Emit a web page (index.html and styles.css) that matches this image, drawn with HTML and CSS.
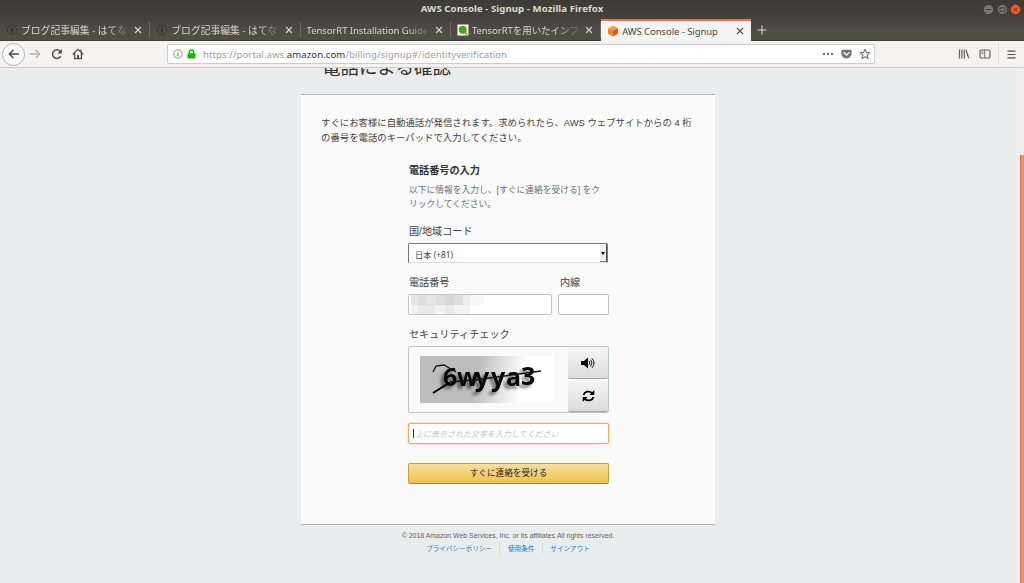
FILE: index.html
```html
<!DOCTYPE html>
<html lang="ja">
<head>
  <meta charset="UTF-8">
  <title>AWS Console - Signup</title>
  <link rel="stylesheet" href="styles.css">
</head>
<body>

  <header class="titlebar">
    <span class="window-title">AWS Console - Signup - Mozilla Firefox</span>
    <div class="window-buttons">
      <svg width="11" height="11" viewBox="0 0 11 11"><circle cx="5.5" cy="5.5" r="5" fill="#797670" stroke="#33322e" stroke-width=".6"/><path d="M3 5.5h5" stroke="#3c3b37"/></svg>
      <svg width="11" height="11" viewBox="0 0 11 11"><circle cx="5.5" cy="5.5" r="5" fill="#797670" stroke="#33322e" stroke-width=".6"/><rect x="3" y="3.8" width="5" height="3.5" fill="none" stroke="#3c3b37" stroke-width=".9"/></svg>
      <svg width="11" height="11" viewBox="0 0 11 11"><circle cx="5.5" cy="5.5" r="5" fill="#ee5a2a" stroke="#6b2f1c" stroke-width=".5"/><path d="M3.8 3.8l3.4 3.4M7.2 3.8L3.8 7.2" stroke="#5d2511"/></svg>
    </div>
  </header>

  <nav class="tabs">
    <div class="tab">
      <svg class="favicon" viewBox="0 0 12 12"><circle cx="6" cy="6" r="4.7" fill="none" stroke="#35342f" stroke-width=".9"/><path d="M6 2.5l1.2 3.2L6.7 9H5.3l-.5-3.3z" fill="#35342f"/></svg>
      <span class="tab-title fade jp1">ブログ記事編集 - はてな</span>
      <svg class="close" viewBox="0 0 8 8"><path d="M1 1l6 6M7 1L1 7"/></svg>
    </div>
    <div class="tab">
      <svg class="favicon" viewBox="0 0 12 12"><circle cx="6" cy="6" r="4.7" fill="none" stroke="#35342f" stroke-width=".9"/><path d="M6 2.5l1.2 3.2L6.7 9H5.3l-.5-3.3z" fill="#35342f"/></svg>
      <span class="tab-title fade jp1">ブログ記事編集 - はてな</span>
      <svg class="close" viewBox="0 0 8 8"><path d="M1 1l6 6M7 1L1 7"/></svg>
    </div>
    <div class="tab">
      <span class="tab-title fade latin">TensorRT Installation Guide</span>
      <svg class="close" viewBox="0 0 8 8"><path d="M1 1l6 6M7 1L1 7"/></svg>
    </div>
    <div class="tab">
      <svg class="favicon" viewBox="0 0 12 12"><rect x=".5" y=".5" width="11" height="11" fill="#fff"/><circle cx="5.7" cy="5.8" r="4" fill="#45a80c"/><path d="M8 8.5l2.4 2.2" stroke="#45a80c" stroke-width="1.2"/></svg>
      <span class="tab-title fade mixed">TensorRTを用いたインフ</span>
      <svg class="close" viewBox="0 0 8 8"><path d="M1 1l6 6M7 1L1 7"/></svg>
    </div>
    <div class="tab active">
      <svg class="favicon" viewBox="0 0 12 12"><path d="M6 .7l5 2.6L6 5.6 1 3.3z" fill="#fb9a3c"/><path d="M1 3.3l5 2.3v5.8L1 8.8z" fill="#f58220"/><path d="M11 3.3L6 5.6v5.8l5-2.6z" fill="#e8591a"/></svg>
      <span class="tab-title aws">AWS Console - Signup</span>
      <svg class="close" viewBox="0 0 8 8"><path d="M1 1l6 6M7 1L1 7"/></svg>
    </div>
    <svg class="new-tab" viewBox="0 0 10 10"><path d="M5 .5v9M.5 5h9"/></svg>
  </nav>

  <div class="toolbar">
    <div class="back">
      <svg width="12" height="12" viewBox="0 0 12 12"><path d="M11 6H1.5M5.5 1.8L1.3 6l4.2 4.2" fill="none" stroke="#4a4a4a" stroke-width="1.4"/></svg>
    </div>
    <svg class="forward" viewBox="0 0 12 12"><path d="M1 6h9.5M6.5 1.8L10.7 6l-4.2 4.2" fill="none" stroke="#b5b4b1" stroke-width="1.3"/></svg>
    <svg class="reload" viewBox="0 0 12 12"><path d="M9.7 8.1A4.3 4.3 0 1 1 9.2 3.4" fill="none" stroke="#505050" stroke-width="1.5"/><path d="M10.9 1v4.4H6.5z" fill="#505050"/></svg>
    <svg class="home" viewBox="0 0 12 12"><path d="M.7 6.5L6 1.3l5.3 5.2M2.6 5.5v5.2h6.8V5.5" fill="none" stroke="#505050" stroke-width="1.3"/><path d="M5 7h2v4H5zM8.3 1.6h1.3v2.5L8.3 3z" fill="#505050"/></svg>
    <div class="urlbar">
      <svg class="info" viewBox="0 0 10 10"><circle cx="5" cy="5" r="4.2" fill="none" stroke="#858585" stroke-width=".9"/><path d="M5 4.3v3.2M5 2.4v1.1" stroke="#777" stroke-width="1.1"/></svg>
      <svg class="lock" viewBox="0 0 9 10"><path d="M2.3 5V3.2a2.2 2.2 0 0 1 4.4 0V5" fill="none" stroke="#12bc00" stroke-width="1.4"/><rect x=".5" y="4.3" width="8" height="5.2" rx=".7" fill="#12bc00"/></svg>
      <span class="url">https://portal.aws.<b>amazon.com</b>/billing/signup#/identityverification</span>
      <svg class="dots" viewBox="0 0 12 4"><g fill="#777"><circle cx="2" cy="2" r="1.3"/><circle cx="6" cy="2" r="1.3"/><circle cx="10" cy="2" r="1.3"/></g></svg>
      <svg class="pocket" viewBox="0 0 11 10"><path d="M1.3.7h8.4q1 0 1 1v2.6a5.2 5.2 0 0 1-10.4 0V1.700q0-1 1-1z" fill="#777"/><path d="M3 3.600l2.500 2.400L8 3.600" fill="none" stroke="#fff" stroke-width="1.3" stroke-linecap="round"/></svg>
      <svg class="star" viewBox="0 0 12 12"><path d="M6 1.200l1.400 3.200 3.500.3-2.700 2.300.9 3.500L6 8.700l-3.100 1.800.9-3.500L1.100 4.700l3.500-.3z" fill="none" stroke="#777" stroke-width="1.1" stroke-linejoin="round"/></svg>
    </div>
    <svg class="library" viewBox="0 0 12 10"><path d="M1.500.5v9M3.900.5v9M6.300.5v9M8 .8l2.700 8.500" fill="none" stroke="#606060" stroke-width="1.200"/></svg>
    <svg class="sidebar" viewBox="0 0 12 10"><rect x="1" y="1" width="10" height="8" rx="1.300" fill="none" stroke="#606060" stroke-width="1.200"/><path d="M5.700 1v8M2.500 3h2M2.500 4.600h2" stroke="#606060" stroke-width=".9"/></svg>
    <div class="menu">
      <svg width="9" height="9" viewBox="0 0 9 9"><path d="M.5 1.200h8M.5 4.500h8M.5 7.800h8" stroke="#505050" stroke-width="1.200"/></svg>
    </div>
  </div>

  <div class="viewport">
    <main class="page">
      <h1>電話による確認</h1>
      <section class="panel">
        <p class="intro">すぐにお客様に自動通話が発信されます。求められたら、AWS ウェブサイトからの 4 桁<br>の番号を電話のキーパッドで入力してください。</p>
        <div class="form">
          <h2>電話番号の入力</h2>
          <p class="hint">以下に情報を入力し、[すぐに連絡を受ける] をク<br>リックしてください。</p>

          <div class="label">国/地域コード</div>
          <div class="select">
            <span>日本 (+81)</span>
            <i class="select-arrow"></i>
          </div>

          <div class="phone-row">
            <div class="number">
              <div class="label">電話番号</div>
              <div class="input">
                <svg width="73" height="19" viewBox="0 0 73 19">
                  <path d="M0 0h73v10H0z" fill="#f8f8f8"/>
                  <path d="M0 0h52v10H0z" fill="#dedede"/>
                  <path d="M0 0h7v10H0zM15 0h10v10H15z" fill="#e5e5e5"/>
                  <path d="M34 0h9v10h-9z" fill="#d9d9d9"/>
                  <path d="M52 0h7v10h-7z" fill="#ededed"/>
                  <path d="M0 10h59v9H0z" fill="#f2f2f2"/>
                  <path d="M7 10h17v9H7zM34 10h9v9h-9z" fill="#e9e9e9"/>
                </svg>
              </div>
            </div>
            <div class="extension">
              <div class="label">内線</div>
              <div class="input"></div>
            </div>
          </div>

          <div class="label">セキュリティチェック</div>
          <div class="captcha">
            <div class="captcha-image">
              <svg width="134" height="47" viewBox="0 0 134 47">
                <text x="23 37 55 71 86 101" y="30 30 30 30 30 29">6wyya3</text>
                <path d="M13 16l3-6 8-1 12 7M13 37l17-11M30 26l25-2 66-9" fill="none" stroke="#111" stroke-width="1.300"/>
                <path d="M13 37l16-10" stroke="#000" stroke-width="2"/>
              </svg>
            </div>
            <div class="captcha-buttons">
              <div class="captcha-button">
                <svg width="14" height="12" viewBox="0 0 14 12"><path d="M0 4h3l4-3.500v11L3 8H0z" fill="#000"/><path d="M8.200 4.200q1.500 1.800 0 3.600M9.600 2.700q2.800 3.300 0 6.600M11 1.200q4 4.800 0 9.600" fill="none" stroke="#000" stroke-width=".9"/></svg>
              </div>
              <div class="captcha-button">
                <svg width="13" height="12" viewBox="0 0 13 12"><path d="M1.500 5A5 4.500 0 0 1 10 3M11.500 7A5 4.500 0 0 1 3 9" fill="none" stroke="#000" stroke-width="1.800"/><path d="M12.300 0v5H7.500zM.7 12V7h4.800z" fill="#000"/></svg>
              </div>
            </div>
          </div>

          <div class="answer"><i class="caret"></i><span>上に表示された文字を入力してください</span></div>
          <div class="submit">すぐに連絡を受ける</div>
        </div>
      </section>
      <footer>
        <p>© 2018 Amazon Web Services, Inc. or its affiliates.All rights reserved.</p>
        <div class="links">
          <a>プライバシーポリシー</a>
          <a>使用条件</a>
          <a>サインアウト</a>
        </div>
      </footer>
    </main>
    <div class="scrollbar"><div class="thumb"></div></div>
  </div>

</body>
</html>
```
FILE: styles.css
```css
* {
  box-sizing: border-box;
}

body {
  margin: 0;
  height: 583px;
  overflow: hidden;
  display: flex;
  flex-direction: column;
  font-family: "Liberation Sans", "Noto Sans CJK JP", sans-serif;
  color: #444;
}

h1, h2, p {
  margin: 0;
}

svg {
  display: block;
  flex: none;
}

/* browser window */
.titlebar {
  position: relative;
  height: 19px;
  flex: none;
  background: linear-gradient(#3b3a36, #45433d);
  text-align: center;
  font: bold 9.6px/18px "Noto Sans", sans-serif;
  color: #dfdbd2;
}

.window-title {
  letter-spacing: 0.08px;
}

.window-buttons {
  position: absolute;
  top: 4px;
  right: 3px;
  display: flex;
  gap: 2.5px;
}

.tabs {
  display: flex;
  height: 22px;
  flex: none;
  background: linear-gradient(#45433d, #504d45 60%);
  border-bottom: 1px solid #3f3d37;
  font-family: "Noto Sans", "Noto Sans CJK JP", sans-serif;
  font-size: 9.5px;
  color: #d8d4cb;
}

.tab {
  display: flex;
  align-items: center;
  width: 150.3px;
  height: 22px;
  flex: none;
  padding: 0 7px 0 6px;
  border-right: 1px solid transparent;
  border-image: linear-gradient(transparent 15%, #6b6860 15%, #6b6860 85%, transparent 85%) 1;
}

.favicon {
  width: 12px;
  height: 12px;
  margin-right: 3px;
}

.tab-title {
  flex: 1;
  overflow: hidden;
  white-space: nowrap;
}

.fade {
  margin-right: 4px;
  -webkit-mask-image: linear-gradient(to right, #000 80%, transparent);
  mask-image: linear-gradient(to right, #000 80%, transparent);
}

.jp1 {
  font-size: 9.8px;
}

.latin {
  letter-spacing: -0.05px;
}

.mixed {
  letter-spacing: -0.05px;
}

.close {
  width: 8px;
  height: 8px;
  stroke: #d8d4cb;
  stroke-width: 1.1;
  fill: none;
}

.active {
  border: 0;
  border-top: 2px solid #ee7346;
  border-image: none;
  background: #f5f4f2;
  color: #4a4a4a;
}

.active .close {
  stroke: #555;
}

.aws {
  letter-spacing: -0.07px;
}

.new-tab {
  width: 10px;
  height: 10px;
  margin: 6px 0 0 6px;
  stroke: #d8d4cb;
  stroke-width: 1.1;
}

.toolbar {
  display: flex;
  align-items: center;
  height: 27px;
  flex: none;
  padding-left: 2px;
  background: #f4f3f2;
  border-bottom: 1px solid #cfcdca;
}

.back {
  display: flex;
  align-items: center;
  justify-content: center;
  width: 23px;
  height: 23px;
  border: 1px solid #b0afad;
  border-radius: 50%;
  background: #fcfcfc;
}

.forward {
  width: 12px;
  height: 12px;
  margin-left: 4px;
}

.reload {
  width: 12px;
  height: 12px;
  margin-left: 10px;
}

.home {
  width: 12px;
  height: 12px;
  margin-left: 9px;
}

.urlbar {
  display: flex;
  align-items: center;
  width: 708px;
  height: 20px;
  margin-left: 83px;
  padding: 0 3px 0 5px;
  border: 1px solid #cccbc8;
  border-radius: 2px;
  background: #fff;
}

.info {
  width: 10px;
  height: 10px;
}

.lock {
  width: 9px;
  height: 10px;
  margin: 0 7px 0 4px;
}

.url {
  flex: 1;
  font: 9.6px "Noto Sans", sans-serif;
  letter-spacing: 0.06px;
  color: #a0a0a0;
}

.url b {
  font-weight: normal;
  color: #333;
}

.dots {
  width: 12px;
  height: 4px;
}

.pocket {
  width: 11px;
  height: 10px;
  margin: 0 7px;
}

.star {
  width: 12px;
  height: 12px;
}

.library {
  width: 12px;
  height: 10px;
  margin-left: 83px;
}

.sidebar {
  width: 12px;
  height: 10px;
  margin-left: 9px;
}

.menu {
  display: flex;
  align-items: center;
  height: 22px;
  margin-left: 7px;
  padding-left: 8px;
  border-left: 1px solid #dddbd9;
}

/* page */
.viewport {
  display: flex;
  flex: 1;
  overflow: hidden;
  background: #e9eded;
}

.page {
  width: 414px;
  margin-left: 301px;
  margin-right: 301px;
}

h1 {
  height: 40px;
  margin-top: -14px;
  padding-left: 21px;
  font-size: 18.5px;
  font-weight: normal;
  line-height: 28px;
  color: #333;
}

.panel {
  height: 431px;
  padding: 21px 20px 0;
  border-top: 1px solid #b5baba;
  border-bottom: 1px solid #b5baba;
  background: #fafafa;
}

.intro {
  font-size: 9.38px;
  line-height: 15px;
  white-space: nowrap;
}

.form {
  width: 201px;
  margin: 16px 0 0 87px;
}

h2 {
  padding-left: 1px;
  font-size: 10.15px;
  line-height: 18px;
  color: #333;
}

.hint {
  margin: 3px 0 12px;
  padding-left: 1px;
  font-size: 8.75px;
  line-height: 14px;
  white-space: nowrap;
  color: #687078;
}

.label {
  height: 20px;
  padding-left: 1px;
  font-size: 10.15px;
  line-height: 17px;
}

.select {
  display: flex;
  justify-content: space-between;
  width: 200px;
  height: 20px;
  border: 1px solid #777;
  border-bottom-color: #ddd;
  border-radius: 2px 2px 0 0;
  background: #fff;
  padding-left: 6px;
  font: 8.3px/21px "Noto Sans", "Noto Sans CJK JP", sans-serif;
}

.select-arrow {
  width: 7px;
  border-right: 1px solid #555;
  border-bottom: 1px solid #777;
  background: #eee;
}

.select-arrow::before {
  content: "";
  display: block;
  margin: 8px 0 0 1px;
  width: 0;
  border: 2.5px solid transparent;
  border-top: 3px solid #000;
  border-bottom: 0;
}

.phone-row {
  display: flex;
  gap: 6px;
  margin: 11px 0;
}

.number {
  width: 144px;
}

.extension {
  width: 51px;
}

.input {
  height: 21px;
  padding-left: 2px;
  border: 1px solid #bac8c6;
  border-radius: 2px;
  background: #fff;
}

.extension .label {
  padding-left: 2px;
}

.captcha {
  display: flex;
  justify-content: space-between;
  height: 67px;
  border: 1px solid #bac8c6;
  border-radius: 2px;
  background: #fafafa;
}

.captcha-image {
  width: 134px;
  height: 47px;
  margin: 9px 0 0 11px;
  background: linear-gradient(100deg, #bdbdbd 42%, #fff 75%);
}

.captcha-image text {
  font: bold 25px "Noto Sans", sans-serif;
  fill: #080808;
  filter: drop-shadow(-3px 3px 1.5px rgba(0, 0, 0, 0.5));
}

.captcha-buttons {
  width: 40px;
}

.captcha-button {
  display: flex;
  align-items: center;
  justify-content: center;
  height: 32px;
  border-bottom: 1px solid #aaa;
  border-radius: 0 0 2px 2px;
  background: linear-gradient(#f6f6f6, #dcdcdc);
}

.captcha-button + .captcha-button {
  margin-top: 1px;
}

.answer {
  display: flex;
  align-items: center;
  height: 21px;
  margin-top: 10px;
  padding-left: 4px;
  border: 1px solid #eda866;
  border-radius: 2px;
  background: #fff;
  box-shadow: 0 0 2px #f1be8c;
  font-size: 8px;
  font-style: italic;
  color: #c8c8c8;
}

.caret {
  width: 1px;
  height: 9px;
  margin-right: 1px;
  background: #333;
}

.submit {
  height: 21px;
  margin-top: 19px;
  border: 1px solid #c9a13c;
  border-bottom-color: #b38b25;
  border-radius: 2px;
  background: linear-gradient(#f6dfa5, #f0c14d);
  font-size: 8.65px;
  line-height: 18px;
  text-align: center;
  color: #222;
}

footer {
  padding-top: 4px;
  text-align: center;
  font-size: 6.95px;
  line-height: 13px;
  color: #666;
}

footer p {
  white-space: nowrap;
}

.links {
  display: flex;
  justify-content: center;
  font-size: 6.6px;
}

.links a {
  height: 11px;
  margin-top: 1px;
  line-height: 11px;
  padding: 0 7.5px;
  color: #1b7ac7;
}

.links a + a {
  border-left: 1px solid #d8dcdc;
}

.scrollbar {
  width: 8px;
  padding: 87px 0 0 4px;
  background: #f1efee;
}

.thumb {
  height: 440px;
  border-left: 1px solid #d9795a;
  background: #f0906a;
}
```
